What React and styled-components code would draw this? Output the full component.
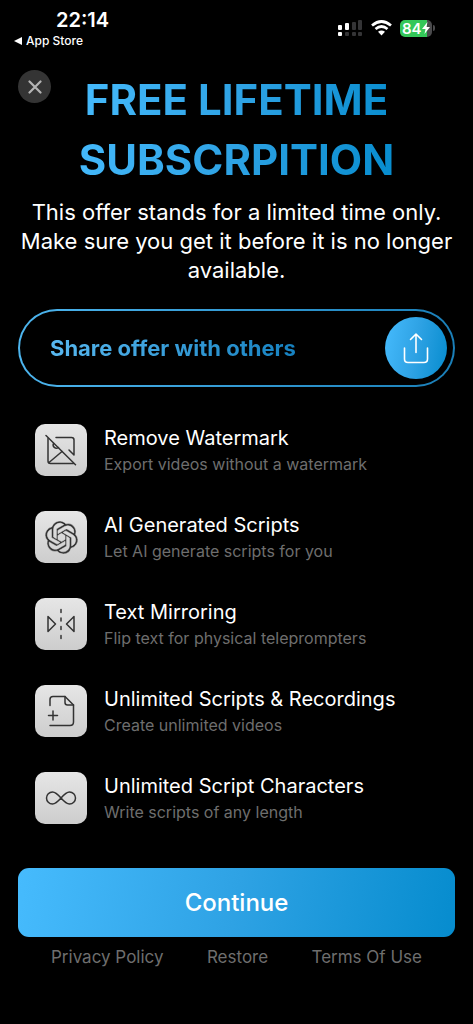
import React from 'react';
import styled, { createGlobalStyle } from 'styled-components';
import { SiOpenai } from 'react-icons/si';

const GlobalStyle = createGlobalStyle`
  *, *::before, *::after { box-sizing: border-box; }
  body {
    margin: 0;
    background: #000;
    color: #fff;
    font-family: Inter, "Liberation Sans", sans-serif;
  }
  button { font: inherit; border: 0; padding: 0; cursor: pointer; }
`;

const blue = 'linear-gradient(100deg, #46bbfd, #2ea2e4 50%, #068cce)';

const Screen = styled.div`
  min-height: 100vh;
  display: flex;
  flex-direction: column;
  padding: 8px 18px 32px;
`;

const StatusBar = styled.header`
  display: flex;
  justify-content: space-between;
  align-items: flex-start;
  margin: 0 20px 0 -4px;
`;

const StatusLeft = styled.div`
  display: flex;
  flex-direction: column;
`;

const Time = styled.time`
  padding-left: 42px;
  font-size: 20px;
  font-weight: 600;
  line-height: 24px;
`;

const BackLink = styled.a`
  display: flex;
  align-items: center;
  gap: 4px;
  color: #fff;
  text-decoration: none;
  font-size: 12px;
  font-weight: 500;
  line-height: 18px;
`;

const StatusIcons = styled.div`
  display: flex;
  align-items: center;
  gap: 8px;
  height: 40px;
`;

const Battery = styled.div`
  display: flex;
  align-items: center;
  gap: 1px;
`;

const BatteryBody = styled.div`
  display: flex;
  align-items: center;
  width: 32px;
  height: 17px;
  padding-left: 2px;
  border-radius: 5px;
  background: linear-gradient(90deg, #34c759 84%, #4a4a4c 84%);
  font-size: 15px;
  font-weight: 600;
  line-height: 17px;
`;

const BatteryTip = styled.div`
  width: 2px;
  height: 6px;
  border-radius: 0 2px 2px 0;
  background: #4a4a4c;
`;

const Hero = styled.section`
  display: grid;
  grid-template-columns: 33px 1fr 33px;
  margin-top: 12px;
`;

const CloseButton = styled.button`
  display: grid;
  place-items: center;
  width: 33px;
  height: 33px;
  margin-top: 8px;
  border-radius: 50%;
  background: #343434;
`;

const Title = styled.h1`
  justify-self: center;
  margin: 8px 0 0;
  font-size: 42px;
  font-weight: 700;
  line-height: 60px;
  text-align: center;
  color: transparent;
  background: ${blue};
  background-clip: text;
`;

const Subtitle = styled.p`
  margin: 8px 0 0;
  font-size: 22px;
  line-height: 29px;
  text-align: center;
`;

const ShareButton = styled.button`
  display: flex;
  align-items: center;
  justify-content: space-between;
  height: 78px;
  margin: 24px 0 0;
  padding: 0 6px 0 30px;
  border: 2px solid transparent;
  border-radius: 39px;
  background: linear-gradient(#000, #000) padding-box,
    linear-gradient(90deg, #4db5ee, #1a7fb8) border-box;
`;

const ShareLabel = styled.span`
  font-size: 22px;
  font-weight: 700;
  line-height: 30px;
  color: transparent;
  background: linear-gradient(90deg, #58b8f0, #1681c0);
  background-clip: text;
`;

const ShareCircle = styled.span`
  display: grid;
  place-items: center;
  width: 62px;
  height: 62px;
  border-radius: 50%;
  background: ${blue};
`;

const Features = styled.ul`
  display: flex;
  flex-direction: column;
  gap: 35px;
  margin: 37px 0 0;
  padding: 0 17px;
  list-style: none;
`;

const Feature = styled.li`
  display: flex;
  align-items: center;
  gap: 17px;
`;

const Tile = styled.div`
  display: grid;
  place-items: center;
  flex: none;
  width: 52px;
  height: 52px;
  border-radius: 10px;
  background: linear-gradient(#e6e6e6, #cdcdcd);
  color: #333;
`;

const KnotIcon = styled(SiOpenai)`
  stroke: #dadada;
  stroke-width: 0.4px;
`;

const FeatureTitle = styled.h2`
  margin: 0;
  font-size: 20px;
  font-weight: 400;
  line-height: 28px;
`;

const FeatureText = styled.p`
  margin: 0;
  font-size: 16px;
  line-height: 24px;
  color: #6e6e6e;
`;

const ContinueButton = styled.button`
  height: 69px;
  margin-top: 44px;
  border-radius: 11px;
  background: ${blue};
  color: #fff;
  font-size: 24px;
  font-weight: 500;
`;

const Links = styled.nav`
  display: flex;
  justify-content: space-between;
  padding: 8px 33px 0;
`;

const FooterLink = styled.a`
  color: #6e6e6e;
  text-decoration: none;
  font-size: 17px;
  line-height: 24px;
`;

const Drawing = ({ w, h, children, sw = 1.5 }) => (
  <svg
    width={w}
    height={h}
    viewBox={`0 0 ${w} ${h}`}
    fill="none"
    stroke="currentColor"
    strokeWidth={sw}
    strokeLinecap="round"
    strokeLinejoin="round"
    aria-hidden="true"
  >
    {children}
  </svg>
);

const NoImageIcon = () => (
  <Drawing w={32} h={32}>
    <path d="M1 1.500 30.500 30.700" />
    <path d="M11 3.500H26.500Q29 3.500 29 6V21L24 16" />
    <path d="M3 4.500V27Q3 29.500 5.500 29.500H28.500" />
    <path d="M4 28.500 17 17.500" />
    <path d="M8.500 9.500C7 12.500 10.500 15.500 13.500 13.500" />
  </Drawing>
);

const MirrorIcon = () => (
  <Drawing w={30} h={32}>
    <path d="M2 8.500V23.500L9.500 16Z" />
    <path d="M28 8.500V23.500L20.500 16Z" />
    <path d="M15 1.500V4.500M15 10V13M15 18.500V21.500M15 27.500V30.500" />
  </Drawing>
);

const AddFileIcon = () => (
  <Drawing w={28} h={32}>
    <path d="M3 10.500V4.500Q3 1.500 6 1.500H18L26.500 10V27Q26.500 30.500 23 30.500H3" />
    <path d="M18 1.500V7.500Q18 10 20.500 10H26.500" />
    <path d="M1.500 20.500H10.500M6 16V25" />
  </Drawing>
);

const InfinityIcon = () => (
  <Drawing w={32} h={16}>
    <path d="M16 8C12.500 4 10.500 2 7.500 2A6 6 0 0 0 7.500 14C10.500 14 12.500 12 16 8S21.500 2 24.500 2A6 6 0 0 1 24.500 14C21.500 14 19.500 12 16 8Z" />
  </Drawing>
);

const features = [
  { title: 'Remove Watermark', text: 'Export videos without a watermark', icon: <NoImageIcon /> },
  { title: 'AI Generated Scripts', text: 'Let AI generate scripts for you', icon: <KnotIcon size={33} aria-hidden="true" /> },
  { title: 'Text Mirroring', text: 'Flip text for physical teleprompters', icon: <MirrorIcon /> },
  { title: 'Unlimited Scripts & Recordings', text: 'Create unlimited videos', icon: <AddFileIcon /> },
  { title: 'Unlimited Script Characters', text: 'Write scripts of any length', icon: <InfinityIcon /> },
];

export default function App() {
  return (
    <Screen>
      <GlobalStyle />
      <StatusBar>
        <StatusLeft>
          <Time>22:14</Time>
          <BackLink href="#">
            <svg width="8" height="8" viewBox="0 0 8 8" fill="#fff" aria-hidden="true">
              <path d="M0 4 8 0V8Z" />
            </svg>
            App Store
          </BackLink>
        </StatusLeft>
        <StatusIcons>
          <svg width="25" height="17" viewBox="0 0 25 17" fill="#fff" aria-hidden="true">
            <rect x="0" y="5" width="4" height="5" rx="1" />
            <rect x="7" y="3" width="4" height="7" rx="1" />
            <rect x="14" y="2" width="4" height="8" rx="1" fill="#343436" />
            <rect x="20" y="0" width="4" height="10" rx="1" fill="#343436" />
            <rect x="0" y="12" width="4" height="4" rx="1" />
            <rect x="7" y="12" width="4" height="4" rx="1" fill="#343436" />
            <rect x="14" y="12" width="4" height="4" rx="1" fill="#343436" />
            <rect x="20" y="12" width="4" height="4" rx="1" fill="#343436" />
          </svg>
          <svg width="21" height="16" viewBox="0 0 21 16" aria-hidden="true">
            <g fill="none" stroke="#fff" strokeWidth="2.700">
              <path d="M1 5.500Q10.500-2.500 20 5.500" />
              <path d="M4.500 9Q10.500 4 16.500 9" />
            </g>
            <path d="M7 11.800Q10.500 9 14 11.800L10.500 15.500Z" fill="#fff" />
          </svg>
          <Battery>
            <BatteryBody>
              84
              <svg width="8" height="12" viewBox="0 0 8 12" fill="#fff" aria-hidden="true">
                <path d="M5.500 0 0 7H3.500L2.500 12 8 5H4.500Z" />
              </svg>
            </BatteryBody>
            <BatteryTip />
          </Battery>
        </StatusIcons>
      </StatusBar>

      <Hero>
        <CloseButton type="button" aria-label="Close">
          <svg width="14" height="14" viewBox="0 0 14 14" stroke="#b4b4b4" strokeWidth="2.200" strokeLinecap="round" aria-hidden="true">
            <path d="M1.500 1.500 12.500 12.500M12.500 1.500 1.500 12.500" />
          </svg>
        </CloseButton>
        <Title>
          FREE LIFETIME
          <br />
          SUBSCRPITION
        </Title>
      </Hero>
      <Subtitle>This offer stands for a limited time only. Make sure you get it before it is no longer available.</Subtitle>

      <ShareButton type="button">
        <ShareLabel>Share offer with others</ShareLabel>
        <ShareCircle>
          <svg width="26" height="32" viewBox="0 0 26 32" fill="none" stroke="#fff" strokeWidth="1.600" strokeLinecap="round" strokeLinejoin="round" aria-hidden="true">
            <path d="M13 20.500V2M7.500 7.500 13 2 18.500 7.500" />
            <path d="M1.500 16V27Q1.500 30.500 5 30.500H21Q24.500 30.500 24.500 27V16" />
          </svg>
        </ShareCircle>
      </ShareButton>

      <Features>
        {features.map((f) => (
          <Feature key={f.title}>
            <Tile>{f.icon}</Tile>
            <div>
              <FeatureTitle>{f.title}</FeatureTitle>
              <FeatureText>{f.text}</FeatureText>
            </div>
          </Feature>
        ))}
      </Features>

      <ContinueButton type="button">Continue</ContinueButton>
      <Links aria-label="Legal">
        <FooterLink href="#">Privacy Policy</FooterLink>
        <FooterLink href="#">Restore</FooterLink>
        <FooterLink href="#">Terms Of Use</FooterLink>
      </Links>
    </Screen>
  );
}
